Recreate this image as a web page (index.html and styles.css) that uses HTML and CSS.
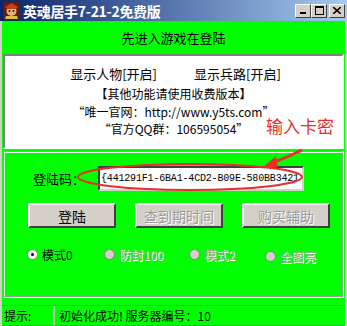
FILE: index.html
```html
<!DOCTYPE html>
<html lang="zh">
<head>
    <meta charset="UTF-8">
    <title>英魂居手7-21-2免费版</title>
    <link rel="stylesheet" href="styles.css">
</head>
<body>
    <div class="window">
        <div class="titlebar">
            <svg class="app-icon" width="17" height="17" viewBox="0 0 17 17">
                <rect width="17" height="17" fill="#5a1e14"/>
                <circle cx="8.5" cy="9" r="5" fill="#e8b070"/>
                <path d="M2 5 L8.5 1 L15 5 L13 7 L4 7 Z" fill="#c83c1e"/>
                <circle cx="6.5" cy="9" r="1" fill="#202020"/>
                <circle cx="10.5" cy="9" r="1" fill="#202020"/>
                <path d="M3 14 L14 14 L15 17 L2 17 Z" fill="#d8c040"/>
            </svg>
            <span class="title">英魂居手7-21-2免费版</span>
            <div class="title-buttons">
                <span class="tbtn">
                    <svg width="8" height="7" viewBox="0 0 8 7"><rect x="1" y="5" width="6" height="2" fill="#000"/></svg>
                </span>
                <span class="tbtn">
                    <svg width="9" height="9" viewBox="0 0 9 9"><rect x="0.5" y="0.5" width="8" height="8" fill="none" stroke="#000"/><rect x="0" y="0" width="9" height="2" fill="#000"/></svg>
                </span>
                <span class="tbtn close">
                    <svg width="8" height="7" viewBox="0 0 8 7"><path d="M0 0 L8 7 M8 0 L0 7" stroke="#000" stroke-width="1.6"/></svg>
                </span>
            </div>
        </div>

        <div class="client">
            <div class="notice">先进入游戏在登陆</div>

            <div class="info">
                <div class="toggles">
                    <span>显示人物[开启]</span>
                    <span>显示兵路[开启]</span>
                </div>
                <div class="promo">
                    <p>【其他功能请使用收费版本】</p>
                    <p>“唯一官网：http://www.y5ts.com”</p>
                    <p>“官方QQ群：106595054”</p>
                </div>
            </div>

            <div class="login">
                <div class="code-row">
                    <label for="code">登陆码：</label>
                    <input type="text" id="code" value="{441291F1-6BA1-4CD2-B09E-580BB3421">
                </div>
                <div class="buttons">
                    <button class="btn">登陆</button>
                    <button class="btn" disabled>查到期时间</button>
                    <button class="btn" disabled>购买辅助</button>
                </div>
                <div class="modes">
                    <span class="mode"><i class="radio checked"></i>模式0</span>
                    <span class="mode off"><i class="radio"></i>防封100</span>
                    <span class="mode off"><i class="radio"></i>模式2</span>
                    <span class="mode off low"><i class="radio"></i>全图亮</span>
                </div>
            </div>

            <div class="status">
                <span class="status-label">提示:</span>
                <span class="status-text">初始化成功! 服务器编号：10</span>
            </div>
        </div>

        <!-- 红色标注 -->
        <div class="mark-text">输入卡密</div>
        <svg class="mark" width="347" height="326" viewBox="0 0 347 326">
            <ellipse cx="190" cy="177" rx="112" ry="13" fill="none" stroke="#e8302a" stroke-width="2"/>
            <path d="M302 150 C290 156 280 160 272 163" fill="none" stroke="#e8302a" stroke-width="3"/>
            <path d="M262 168 L276 156 L278 167 Z" fill="#e8302a"/>
        </svg>
    </div>
</body>
</html>
```

FILE: styles.css
```css
body {
    margin: 0;
    padding: 0;
    font-family: "Noto Sans CJK SC", "DejaVu Sans", sans-serif;
    font-size: 12px;
}

.window {
    position: relative;
    width: 347px;
    height: 326px;
    background-color: #d4d0c8;
    box-sizing: border-box;
    overflow: hidden;
}

.titlebar {
    height: 21px;
    display: flex;
    align-items: center;
    padding: 0 2px 0 3px;
    background: linear-gradient(to right, #0a246a, #a6caf0);
    color: white;
}

.app-icon {
    margin-right: 3px;
}

.title {
    font-weight: bold;
    font-size: 14px;
    letter-spacing: -0.3px;
}

.title-buttons {
    margin-left: auto;
    display: flex;
}

.tbtn {
    width: 16px;
    height: 14px;
    background-color: #d4d0c8;
    border: 1px solid;
    border-color: #fff #404040 #404040 #fff;
    box-sizing: border-box;
    display: flex;
    align-items: center;
    justify-content: center;
}

.tbtn.close {
    margin-left: 2px;
}

.client {
    background-color: #00ff00;
    margin: 0 2px;
    height: 305px;
    display: flex;
    flex-direction: column;
}

.notice {
    height: 33px;
    line-height: 34px;
    text-align: center;
    font-size: 13px;
}

.info {
    height: 95px;
    background-color: white;
    border: 2px solid;
    border-color: #808080 #fff #fff #808080;
    margin: 0 1px;
    box-sizing: border-box;
    text-align: center;
}

.toggles {
    display: flex;
    justify-content: center;
    gap: 37px;
    margin-top: 9px;
    font-size: 13px;
    line-height: 18px;
    padding-left: 4px;
}

.promo {
    margin-top: 2px;
    font-size: 12px;
    line-height: 17.5px;
}

.promo p {
    margin: 0;
}

.login {
    margin: 2px 1px 0;
    height: 147px;
    border: 2px groove #f0f0f0;
    box-sizing: border-box;
    padding: 13px 0 0 22px;
}

.code-row {
    display: flex;
    align-items: center;
}

.code-row label {
    font-size: 13px;
    width: 65px;
    padding-left: 6px;
}

.code-row input {
    width: 206px;
    height: 25px;
    box-sizing: border-box;
    border: 2px solid;
    border-color: #404040 #d4d0c8 #d4d0c8 #404040;
    background-color: white;
    font-family: "Liberation Mono", "DejaVu Sans Mono", monospace;
    font-size: 10px;
    letter-spacing: -0.18px;
    padding: 0 0 0 1px;
}

.buttons {
    display: flex;
    gap: 19px;
    margin-top: 12px;
    padding-left: 1px;
}

.btn {
    width: 88px;
    height: 25px;
    background-color: #d4d0c8;
    border: 2px solid;
    border-color: #fff #404040 #404040 #fff;
    font-family: inherit;
    font-size: 14px;
    color: black;
    padding: 0;
}

.btn:disabled {
    color: #9a9a9a;
    text-shadow: 1px 1px 0 #fff;
}

.modes {
    display: flex;
    margin-top: 15px;
    padding-left: 0;
}

.mode {
    display: flex;
    align-items: center;
    gap: 4px;
    font-size: 12px;
    width: 80px;
}

.mode:nth-child(2) { width: 88px; }
.mode:nth-child(3) { width: 78px; }

.mode.off {
    color: #a0a0a0;
    text-shadow: 1px 1px 0 #fff;
}

.mode.low {
    margin-top: 5px;
}

.radio {
    width: 11px;
    height: 11px;
    border-radius: 50%;
    background-color: #d4d0c8;
    border: 1px solid #808080;
    box-sizing: border-box;
    position: relative;
}

.radio.checked {
    background-color: white;
}

.radio.checked::after {
    content: "";
    position: absolute;
    left: 3px;
    top: 3px;
    width: 3px;
    height: 3px;
    border-radius: 50%;
    background-color: black;
}

.status {
    margin-top: 7px;
    height: 19px;
    border-top: 1px solid #808080;
    border-bottom: 1px solid #808080;
    display: flex;
    align-items: center;
    font-size: 12px;
}

.status-label {
    width: 49px;
    height: 100%;
    line-height: 19px;
    border-right: 2px solid #c0c0c0;
    padding-left: 2px;
}

.status-text {
    padding-left: 4px;
}

.mark-text {
    position: absolute;
    left: 266px;
    top: 113px;
    color: #e8302a;
    font-size: 17px;
}

.mark {
    position: absolute;
    left: 0;
    top: 0;
    pointer-events: none;
}
```
